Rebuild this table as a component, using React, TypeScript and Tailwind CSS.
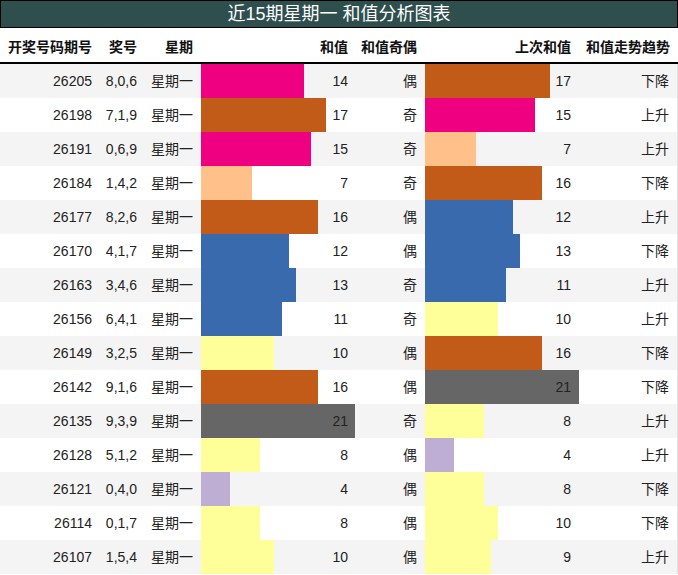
const rows = [
  { qi: "26205", hao: "8,0,6", sum: 14, oe: "偶", prev: 17, trend: "下降" },
  { qi: "26198", hao: "7,1,9", sum: 17, oe: "奇", prev: 15, trend: "上升" },
  { qi: "26191", hao: "0,6,9", sum: 15, oe: "奇", prev: 7, trend: "上升" },
  { qi: "26184", hao: "1,4,2", sum: 7, oe: "奇", prev: 16, trend: "下降" },
  { qi: "26177", hao: "8,2,6", sum: 16, oe: "偶", prev: 12, trend: "上升" },
  { qi: "26170", hao: "4,1,7", sum: 12, oe: "偶", prev: 13, trend: "下降" },
  { qi: "26163", hao: "3,4,6", sum: 13, oe: "奇", prev: 11, trend: "上升" },
  { qi: "26156", hao: "6,4,1", sum: 11, oe: "奇", prev: 10, trend: "上升" },
  { qi: "26149", hao: "3,2,5", sum: 10, oe: "偶", prev: 16, trend: "下降" },
  { qi: "26142", hao: "9,1,6", sum: 16, oe: "偶", prev: 21, trend: "下降" },
  { qi: "26135", hao: "9,3,9", sum: 21, oe: "奇", prev: 8, trend: "上升" },
  { qi: "26128", hao: "5,1,2", sum: 8, oe: "偶", prev: 4, trend: "上升" },
  { qi: "26121", hao: "0,4,0", sum: 4, oe: "偶", prev: 8, trend: "下降" },
  { qi: "26114", hao: "0,1,7", sum: 8, oe: "偶", prev: 10, trend: "下降" },
  { qi: "26107", hao: "1,5,4", sum: 10, oe: "偶", prev: 9, trend: "上升" },
];

const MAX = 21;
const BAR_W = 154;

function barColor(v: number) {
  if (v <= 5) return "bg-[#bfaed4]";
  if (v <= 7) return "bg-[#ffc08a]";
  if (v <= 10) return "bg-[#ffff99]";
  if (v <= 13) return "bg-[#3a6aae]";
  if (v <= 15) return "bg-[#ee0080]";
  if (v <= 19) return "bg-[#c25b17]";
  return "bg-[#666666]";
}

function BarCell({ value, pr }: { value: number; pr: string }) {
  return (
    <div className={`relative w-[154px] h-full flex items-center justify-end ${pr}`}>
      <div
        className={`absolute left-0 top-0 h-full ${barColor(value)}`}
        style={{ width: Math.round((value / MAX) * BAR_W) }}
      />
      <span className="relative">{value}</span>
    </div>
  );
}

export default function App() {
  return (
    <div
      className="w-[678px] text-[14px] text-[#222]"
      style={{ fontFamily: '"Liberation Sans", "Noto Sans CJK SC", sans-serif' }}
    >
      <div className="h-[28px] bg-[#2f4f4f] border border-black flex items-center justify-center text-white text-[18px] leading-none">
        近15期星期一 和值分析图表
      </div>

      <div className="h-[36px] flex items-center font-bold border-b-2 border-black pt-[5px] text-[#111]">
        <div className="w-[100px] text-right pr-[8px]">开奖号码期号</div>
        <div className="w-[45px] text-right pr-[8px]">奖号</div>
        <div className="w-[56px] text-right pr-[8px]">星期</div>
        <div className="w-[154px] text-right pr-[7px]">和值</div>
        <div className="w-[70px] text-right pr-[8px]">和值奇偶</div>
        <div className="w-[154px] text-right pr-[8px]">上次和值</div>
        <div className="w-[99px] text-right pr-[8px]">和值走势趋势</div>
      </div>

      <div className="border-r border-[#e2e2e2]">
        {rows.map((r, i) => (
          <div
            key={r.qi}
            className={`h-[34px] flex items-center ${i % 2 === 0 ? "bg-[#f4f4f4]" : "bg-white"}`}
          >
            <div className="w-[100px] text-right pr-[8px]">{r.qi}</div>
            <div className="w-[45px] text-right pr-[8px]">{r.hao}</div>
            <div className="w-[56px] text-right pr-[8px]">星期一</div>
            <BarCell value={r.sum} pr="pr-[7px]" />
            <div className="w-[70px] text-right pr-[8px]">{r.oe}</div>
            <BarCell value={r.prev} pr="pr-[8px]" />
            <div className="w-[98px] text-right pr-[8px]">{r.trend}</div>
          </div>
        ))}
      </div>
    </div>
  );
}
